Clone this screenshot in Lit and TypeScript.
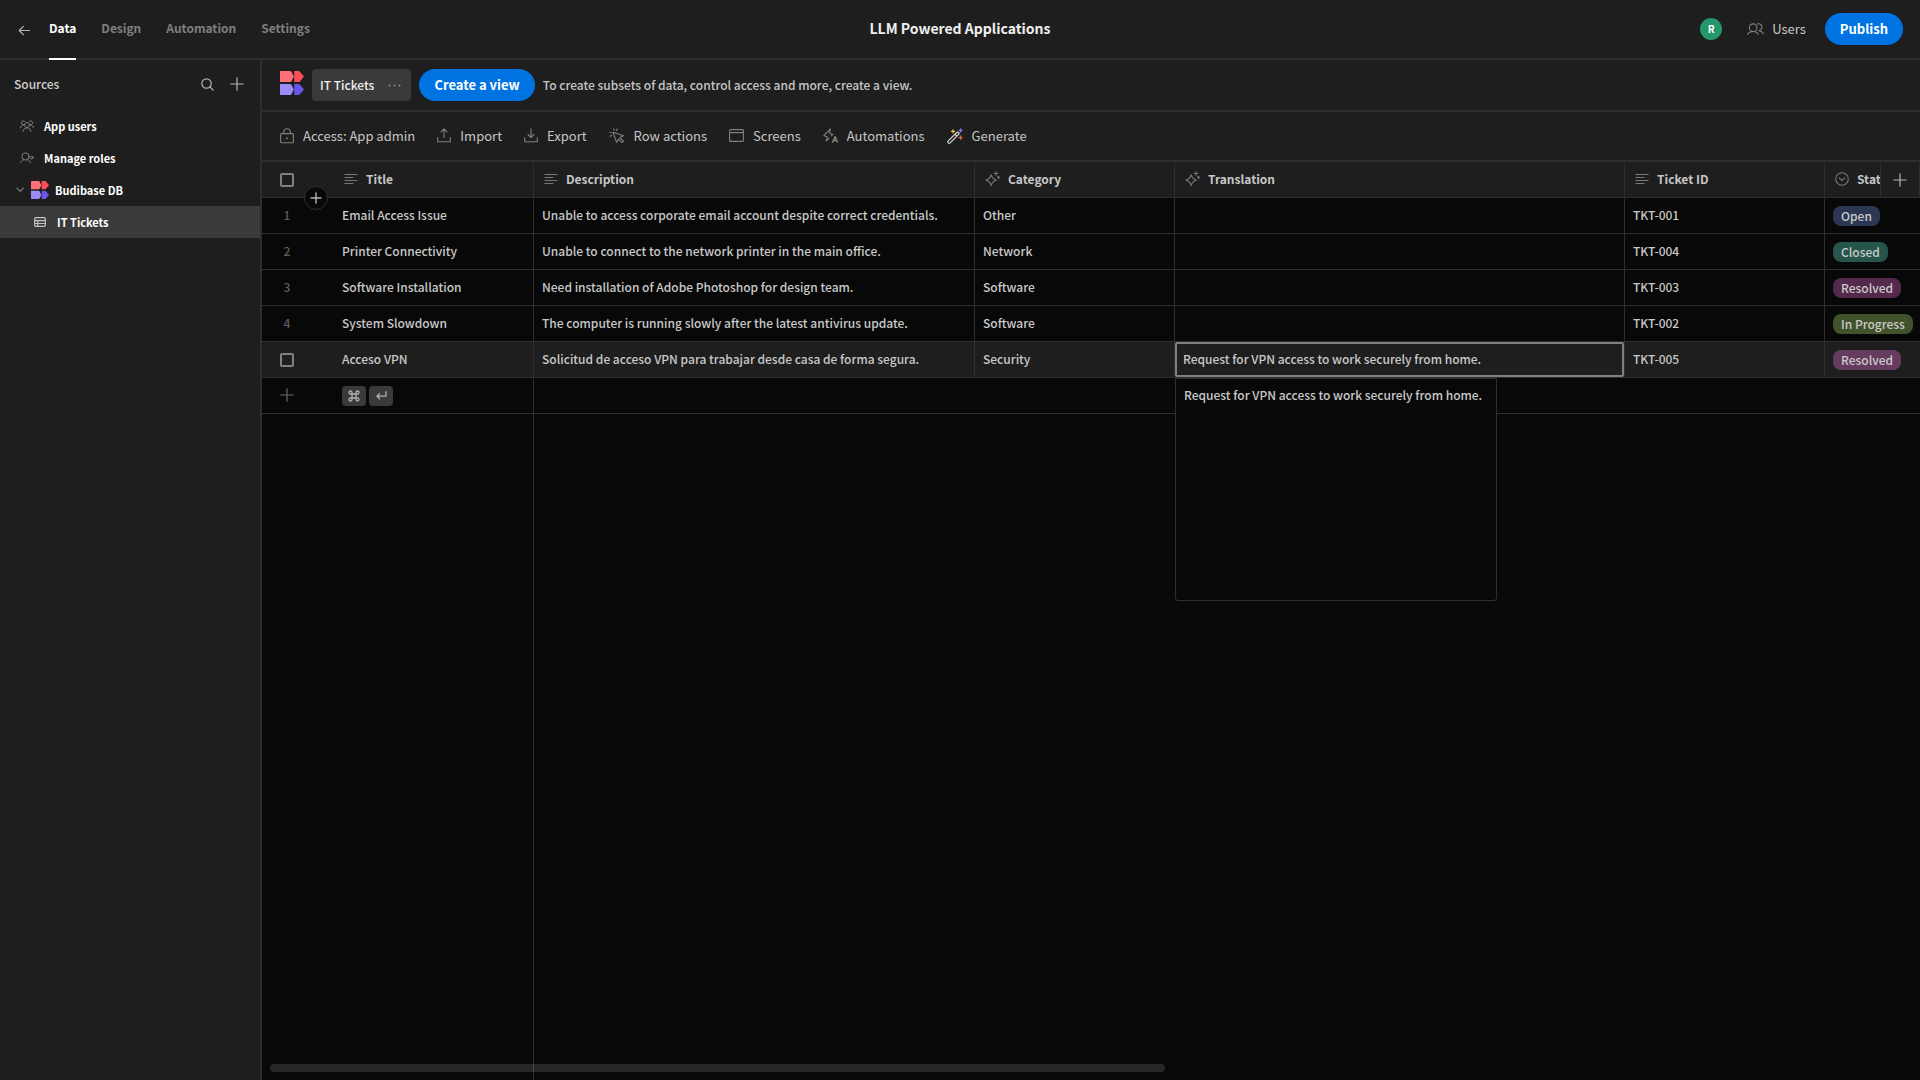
import { LitElement, html, css, svg, nothing } from "lit";
import { customElement } from "lit/decorators.js";
import { classMap } from "lit/directives/class-map.js";

const stroke = (body: unknown, w: number, h: number, sw = 1.2) => html`<svg
  class="icon" width=${w} height=${h} viewBox="0 0 ${w} ${h}" fill="none"
  stroke="currentColor" stroke-width=${sw} stroke-linecap="round" stroke-linejoin="round"
  aria-hidden="true">${body}</svg>`;

const icons = {
  back: () => stroke(svg`<path d="M11.5 6.5H1.2M5.4 2.3L1.2 6.5l4.200 4.200"/>`, 13, 13),
  search: () => stroke(svg`<circle cx="5.500" cy="5.500" r="4.700"/><path d="M9 9l3.200 3.200"/>`, 13, 13),
  plus: () => stroke(svg`<path d="M7 .8v12.400M.8 7h12.400"/>`, 14, 14),
  plusSmall: () => stroke(svg`<path d="M6 1v10M1 6h10"/>`, 12, 12, 1.400),
  chevron: () => stroke(svg`<path d="M1 1.200l3.200 3.200L7.400 1.200"/>`, 9, 6),
  group: () => stroke(svg`<circle cx="7" cy="5" r="2.500"/><path d="M3 11.500c.3-2.400 2-3.600 4-3.600s3.700 1.200 4 3.600M3.600 4.800A2 2 0 1 1 4.800 1.400M.6 7.800c.2-1.600 1.200-2.400 2.600-2.700M10.400 4.800A2 2 0 1 0 9.200 1.400M13.400 7.800c-.2-1.600-1.200-2.400-2.600-2.700"/>`, 14, 12, 1),
  role: () => stroke(svg`<circle cx="5.500" cy="4.500" r="3.600"/><path d="M.6 10.600c.5-1.700 1.800-2.600 3.300-2.900M7.200 7.700c1.500.3 2.800 1.200 3.300 2.900"/><circle cx="11.800" cy="5.600" r="1.300"/>`, 14, 12, 1),
  table: () => stroke(svg`<rect x=".7" y=".7" width="10.600" height="8.600" rx="1"/><path d="M.7 3.600h10.600M.7 6.500h10.600M3.800 3.600v5.700"/>`, 12, 10),
  dots: () => html`<svg class="icon" width="13" height="3" viewBox="0 0 13 3" fill="currentColor" aria-hidden="true"><circle cx="1.500" cy="1.500" r="1"/><circle cx="6.500" cy="1.500" r="1"/><circle cx="11.500" cy="1.500" r="1"/></svg>`,
  lock: () => stroke(svg`<rect x=".6" y="5.600" width="12.800" height="9.200" rx="1"/><path d="M3.700 5.400V4a3.300 3.300 0 0 1 6.600 0v1.400"/><circle cx="7" cy="10.200" r=".4"/>`, 14, 16, 1.100),
  import: () => stroke(svg`<path d="M.7 9.500v4.300h12.600V9.500M7 9.500V1M4 3.800L7 .8l3 3"/>`, 14, 15, 1.100),
  export: () => stroke(svg`<path d="M.7 9.500v4.300h12.600V9.500M7 .8v8.500M4 6.500l3 3 3-3"/>`, 14, 15, 1.100),
  cursor: () => stroke(svg`<path d="M4 4.200l3.600 10.200 1.900-3.400 3.500 3.600 1.500-1.400-3.600-3.700 3.500-1.700zM4.600.9l.6 1.400M8.200.9l-.7 1.500M.9 4.500l1.300.2M1.300 8.300l1.300-.8"/>`, 16, 16, 1.100),
  screen: () => stroke(svg`<rect x=".6" y=".6" width="13.800" height="11.800" rx="1"/><path d="M.6 3.600h13.800"/>`, 15, 13, 1.100),
  bolt: () => stroke(svg`<path d="M7.400.8L.9 7.400l3.400 1.700L3.100 13l2.800-2.800M7.400.8L6.300 4.900l3.500 1.500-1.400 1.500"/><path d="M9.600 14.200l2.500-5.600 2.500 5.600M10.500 12.500h3.200" stroke-width="1.400"/>`, 15, 15, 1.100),
  users: () => stroke(svg`<circle cx="6.200" cy="4.700" r="3.800"/><path d="M.6 11.400c.9-1.900 2.600-2.900 5.600-2.900s4.300 1 5 2.900M10.300 1c3-.8 4.800 1 4.600 3.300-.2 1.900-1.300 3-2.900 3.400 2.400.4 3.600 1.300 4.400 3"/>`, 17, 12, 1.100),
  text: () => stroke(svg`<path d="M.5 1.500h13M.5 4.500h9M.5 7.500h13M.5 10.500h9" stroke-linecap="butt"/>`, 14, 12, 1),
  spark: () => stroke(svg`<path d="M6.200 3.700c.7 3.400 1.800 4.500 5.200 5.500-3.400.9-4.500 2-5.200 5.500-.8-3.500-1.900-4.600-5.300-5.500 3.400-1 4.500-2.100 5.300-5.500zM11 .8v3.400M9.300 2.500h3.400M13.600 5v2.600M12.300 6.300h2.300"/>`, 15, 16, 1.100),
  status: () => stroke(svg`<circle cx="7" cy="7" r="6.300"/><path d="M4.300 5.900L7 8.500l2.700-2.600"/>`, 14, 14, 1.100),
  command: () => stroke(svg`<path d="M4 4h4v4H4zM4 4H2.500A1.500 1.500 0 1 1 4 2.500zM8 4V2.500A1.500 1.500 0 1 1 9.500 4zM8 8h1.500A1.500 1.500 0 1 1 8 9.500zM4 8v1.500A1.500 1.500 0 1 1 2.500 8z"/>`, 12, 12, 1.300),
  enter: () => stroke(svg`<path d="M10 .7v4.500H1.200M3.600 2.600L1 5.200l2.600 2.500"/>`, 11, 9, 1.300),
  wand: () => html`<svg class="icon" width="16" height="16" viewBox="0 0 16 16" fill="none" stroke-linecap="round" aria-hidden="true">
    <path d="M1.300 12.900L9.700 4.500a1.300 1.300 0 0 1 1.900 1.900L3.200 14.800a1.300 1.300 0 0 1-1.900-1.900zM8 6.200l1.900 1.900" stroke="#d8d8d8" stroke-width="1.200"/>
    <path d="M6 1.800v3M4.500 3.300h3" stroke="#e8c63f" stroke-width="1.300"/>
    <path d="M13.600.8v3.200M12 2.400h3.200" stroke="#7f77e8" stroke-width="1.300"/>
    <path d="M13.600 8v3.200M12 9.600h3.200" stroke="#e8604c" stroke-width="1.300"/></svg>`,
};

const logo = (size: number) => html`<svg class="icon" width=${size} height=${size} viewBox="0 0 24 24" aria-hidden="true">
  <path fill="#ff7078" d="M1 0h8.800c.6 0 1.100.2 1.500.6L13.800 5.500 11.300 10.500c-.4.400-.9.600-1.500.6H0V1c0-.6.400-1 1-1z"/>
  <path fill="#ff4e57" d="M14.200 0h4.400c.5 0 1 .3 1.300.7L24 5.600l-4.100 4.800c-.3.400-.8.700-1.300.7h-4.400z"/>
  <path fill="#9b8cf8" d="M0 12.900h9.800c.6 0 1.100.2 1.500.6l2.500 5-2.500 4.900c-.4.400-.9.600-1.500.6H1c-.6 0-1-.4-1-1z"/>
  <path fill="#6a56e8" d="M14.200 12.900h4.400c.5 0 1 .3 1.300.7l4.100 4.900-4.100 4.800c-.3.400-.8.700-1.300.7h-4.400z"/></svg>`;

const tabs = ["Data", "Design", "Automation", "Settings"];

const tools = [
  { icon: icons.lock, label: "Access: App admin" },
  { icon: icons.import, label: "Import" },
  { icon: icons.export, label: "Export" },
  { icon: icons.cursor, label: "Row actions" },
  { icon: icons.screen, label: "Screens" },
  { icon: icons.bolt, label: "Automations" },
  { icon: icons.wand, label: "Generate" },
];

const columns = [
  { icon: icons.text, label: "Title" },
  { icon: icons.text, label: "Description" },
  { icon: icons.spark, label: "Category" },
  { icon: icons.spark, label: "Translation" },
  { icon: icons.text, label: "Ticket ID" },
  { icon: icons.status, label: "Status" },
];

const rows = [
  { title: "Email Access Issue", description: "Unable to access corporate email account despite correct credentials.", category: "Other", translation: "", id: "TKT-001", status: "Open" },
  { title: "Printer Connectivity", description: "Unable to connect to the network printer in the main office.", category: "Network", translation: "", id: "TKT-004", status: "Closed" },
  { title: "Software Installation", description: "Need installation of Adobe Photoshop for design team.", category: "Software", translation: "", id: "TKT-003", status: "Resolved" },
  { title: "System Slowdown", description: "The computer is running slowly after the latest antivirus update.", category: "Software", translation: "", id: "TKT-002", status: "In Progress" },
  { title: "Acceso VPN", description: "Solicitud de acceso VPN para trabajar desde casa de forma segura.", category: "Security", translation: "Request for VPN access to work securely from home.", id: "TKT-005", status: "Resolved" },
];
const activeRow = 4;

const base = css`
  * { box-sizing: border-box; }
  .icon { display: block; flex: none; }
  button { font: inherit; color: inherit; background: none; border: 0; padding: 0; margin: 0; cursor: pointer; }
  a { color: inherit; text-decoration: none; }
  .cta {
    height: 32px; padding: 0 15px; border-radius: 16px; background: #0073e2; color: #fff;
    font-size: 13px; font-weight: 700; white-space: nowrap;
  }
`;

@customElement("app-topbar")
export class AppTopbar extends LitElement {
  static styles = [base, css`
    :host { display: grid; grid-template-columns: 1fr auto 1fr; height: 60px; border-bottom: 2px solid #2e2e2e; }
    .nav { display: flex; align-items: stretch; gap: 25px; padding-left: 18px; margin-bottom: -2px; color: #7f7f7f; font-weight: 700; }
    .back { color: #b4b4b4; margin-right: -7px; }
    .tab { display: flex; align-items: center; border-bottom: 2px solid transparent; padding-bottom: 2px; }
    .current { color: #fff; border-color: #fff; }
    .title { margin: 0; font-size: 14px; line-height: 56px; font-weight: 700; color: #efefef; }
    .right { display: flex; align-items: center; justify-content: flex-end; padding-right: 17px; }
    .avatar {
      width: 22px; height: 22px; border-radius: 50%; background: #26976b; color: #fff;
      font-size: 10px; line-height: 22px; font-weight: 700; text-align: center; margin-right: 25px;
    }
    .users { display: flex; align-items: center; gap: 8px; margin-right: 19px; font-size: 13px; font-weight: 400; }
    .users .icon { color: #808080; }
  `];
  render() {
    return html`
      <nav class="nav">
        <button class="back" aria-label="Back">${icons.back()}</button>
        ${tabs.map((t, i) => html`<a href="#" class=${classMap({ tab: true, current: i === 0 })}>${t}</a>`)}
      </nav>
      <h1 class="title">LLM Powered Applications</h1>
      <div class="right">
        <span class="avatar">R</span>
        <button class="users">${icons.users()}Users</button>
        <button class="cta">Publish</button>
      </div>`;
  }
}

@customElement("app-sources")
export class AppSources extends LitElement {
  static styles = [base, css`
    :host { display: block; border-right: 2px solid #2e2e2e; }
    .head { display: flex; align-items: center; height: 48px; padding: 0 16px 0 14px; gap: 16px; color: #b4b4b4; }
    .name { flex: 1; margin: 0; font-size: 12px; font-weight: 500; color: #d0d0d0; }
    .list { margin: 0; padding: 2px 0 0; list-style: none; font-size: 11px; font-weight: 700; color: #fff; }
    .item { display: flex; align-items: center; height: 32px; padding-left: 20px; gap: 10px; }
    .lead { color: #808080; }
    .db { gap: 6px; padding-left: 16px; }
    .picked { padding-left: 34px; gap: 11px; background: #3a3a3a; }
    .picked .lead { color: #c4c4c4; }
  `];
  render() {
    return html`
      <div class="head">
        <h2 class="name">Sources</h2>
        <button aria-label="Search">${icons.search()}</button>
        <button aria-label="Add source">${icons.plus()}</button>
      </div>
      <ul class="list">
        <li><a href="#" class="item"><span class="lead">${icons.group()}</span>App users</a></li>
        <li><a href="#" class="item"><span class="lead">${icons.role()}</span>Manage roles</a></li>
        <li><a href="#" class="item db"><span class="lead">${icons.chevron()}</span>${logo(18)}Budibase DB</a></li>
        <li><a href="#" class="item picked"><span class="lead">${icons.table()}</span>IT Tickets</a></li>
      </ul>`;
  }
}

@customElement("ticket-grid")
export class TicketGrid extends LitElement {
  static styles = [base, css`
    :host { display: block; position: relative; overflow: hidden; background: #080808; color: #c9c9c9; }
    .grid { display: flex; flex-direction: column; height: 100%; }
    .table { border-collapse: separate; border-spacing: 0; table-layout: fixed; width: 1763px; flex: none; }
    .c-num { width: 72px; } .c-title { width: 200px; } .c-desc { width: 441px; }
    .c-cat { width: 200px; } .c-trans { width: 450px; } .c-id { width: 200px; } .c-status { width: 200px; }
    th, td {
      height: 36px; padding: 0 8px 2px; text-align: left; font-weight: 500; white-space: nowrap;
      border-bottom: 1px solid #2e2e2e; border-right: 1px solid #2e2e2e; line-height: 20px;
    }
    th { background: #1e1e1e; font-weight: 700; color: #c6c6c6; padding-left: 10px; }
    .num { border-right: 0; padding: 0 0 0 18px; }
    .tags { padding-bottom: 0; }
    .index { display: block; width: 14px; padding-bottom: 2px; text-align: center; color: #5f5f5f; }
    .index .icon { color: #6a6a6a; }
    .label { display: flex; align-items: center; gap: 8px; }
    .label .icon { color: #777; }
    .box {
      appearance: none; display: block; margin: 0; width: 14px; height: 14px;
      border: 2px solid #808080; border-radius: 2px; background: transparent;
    }
    .active td { background: #1e1e1e; }
    .picked { position: relative; }
    .picked::after { content: ""; position: absolute; inset: 0; border: 2px solid #808080; border-radius: 2px; }
    .pill {
      display: inline-block; height: 20px; padding: 0 8px; border-radius: 8px; line-height: 20px;
      vertical-align: middle; background: #2b3753;
    }
    .closed { background: #26564b; } .resolved { background: #55294c; } .progress { background: #42532b; }
    .active .resolved { background: #653c5f; }
    .keys { display: flex; gap: 3px; }
    .key { display: grid; place-items: center; width: 24px; height: 20px; border-radius: 4px; background: #3a3a3a; color: #b0b0b0; }
    .rest { flex: 1; width: 272px; border-right: 1px solid #2e2e2e; }
    .addrow {
      position: absolute; left: 42px; top: 24px; width: 24px; height: 24px; border-radius: 50%;
      display: grid; place-items: center; background: #080808; border: 1px solid #2e2e2e; color: #b4b4b4;
    }
    .addcol {
      position: absolute; right: 0; top: 0; width: 40px; height: 36px; display: grid; place-items: center;
      background: #1e1e1e; border: 1px solid #2e2e2e; border-top: 0; color: #b4b4b4;
    }
    .editor {
      position: absolute; left: 0; top: 36px; width: 322px; height: 223px; padding: 6px 8px; z-index: 1; resize: none;
      background: #080808; border: 1px solid #2e2e2e; border-radius: 0 0 3px 3px; color: #c9c9c9;
      font: inherit; line-height: 20px; outline: 0;
    }
    .scroll { position: absolute; left: 8px; bottom: 8px; width: 54%; height: 8px; border-radius: 4px; background: #ffffff20; }
  `];
  render() {
    const pill = (s: string) => html`<span class=${classMap({
      pill: true, closed: s === "Closed", resolved: s === "Resolved", progress: s === "In Progress",
    })}>${s}</span>`;
    return html`
      <div class="grid">
        <table class="table">
          <colgroup>
            <col class="c-num"><col class="c-title"><col class="c-desc"><col class="c-cat">
            <col class="c-trans"><col class="c-id"><col class="c-status">
          </colgroup>
          <thead><tr>
            <th class="num"><input type="checkbox" class="box" aria-label="Select all rows"></th>
            ${columns.map(c => html`<th><span class="label">${c.icon()}${c.label}</span></th>`)}
          </tr></thead>
          <tbody>
            ${rows.map((r, i) => {
              const on = i === activeRow;
              return html`<tr class=${on ? "active" : ""}>
                <td class="num">${on
                  ? html`<input type="checkbox" class="box" aria-label="Select row">`
                  : html`<span class="index">${i + 1}</span>`}</td>
                <td>${r.title}</td><td>${r.description}</td><td>${r.category}</td>
                <td class=${on ? "picked" : ""}>${r.translation}${on
                  ? html`<textarea class="editor" aria-label="Translation" .value=${r.translation}></textarea>` : nothing}</td>
                <td>${r.id}</td><td class="tags">${pill(r.status)}</td>
              </tr>`;
            })}
            <tr>
              <td class="num"><button class="index" aria-label="Add row">${icons.plus()}</button></td>
              <td class="tags"><span class="keys"><span class="key">${icons.command()}</span><span class="key">${icons.enter()}</span></span></td>
              <td colspan="5"></td>
            </tr>
          </tbody>
        </table>
        <div class="rest"></div>
      </div>
      <button class="addrow" aria-label="Insert row">${icons.plusSmall()}</button>
      <button class="addcol" aria-label="Add column">${icons.plus()}</button>
      <div class="scroll"></div>`;
  }
}

@customElement("app-root")
export class AppRoot extends LitElement {
  static styles = [base, css`
    :host {
      display: grid; grid-template-rows: auto 1fr; min-height: 100vh; background: #1e1e1e; color: #c6c6c6;
      font-family: "Noto Sans CJK SC", "Noto Sans", sans-serif; font-size: 12px; line-height: 20px; font-weight: 500;
    }
    .body { display: grid; grid-template-columns: 262px minmax(0, 1fr); }
    .main { display: grid; grid-template-rows: 52px 50px 1fr; min-width: 0; }
    .bar { display: flex; align-items: center; padding: 0 18px; border-bottom: 2px solid #2e2e2e; }
    .views { gap: 8px; }
    .brand { padding-bottom: 4px; }
    .view { display: flex; align-items: center; gap: 14px; height: 32px; padding: 0 10px 0 8px; border-radius: 4px; background: #3a3a3a; color: #f0f0f0; }
    .view .icon { color: #909090; }
    .tools { gap: 22px; padding-bottom: 1px; }
    .tool { display: flex; align-items: center; gap: 9px; white-space: nowrap; font-size: 13px; font-weight: 400; }
    .tool .icon { color: #808080; }
  `];
  render() {
    return html`
      <app-topbar></app-topbar>
      <div class="body">
        <app-sources></app-sources>
        <main class="main">
          <div class="bar views">
            <span class="brand">${logo(24)}</span>
            <button class="view">IT Tickets${icons.dots()}</button>
            <button class="cta">Create a view</button>
            <span>To create subsets of data, control access and more, create a view.</span>
          </div>
          <div class="bar tools">
            ${tools.map(t => html`<button class="tool">${t.icon()}${t.label}</button>`)}
          </div>
          <ticket-grid></ticket-grid>
        </main>
      </div>`;
  }
}
